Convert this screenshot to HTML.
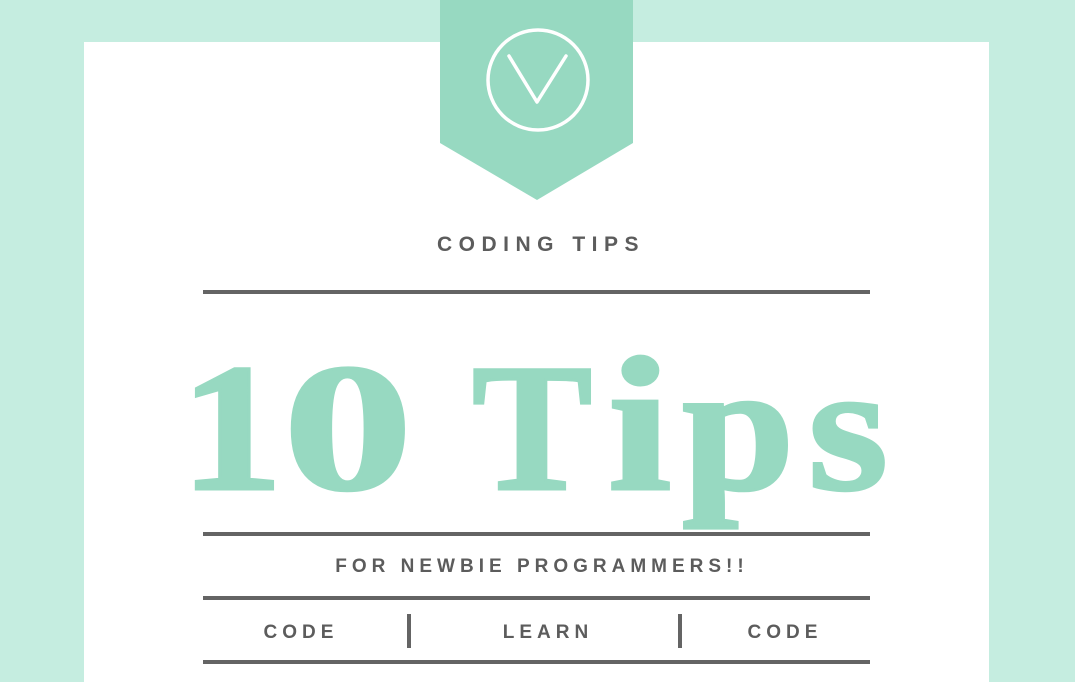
<!DOCTYPE html>
<html><head><meta charset="utf-8"><style>
html,body{margin:0;padding:0;width:1075px;height:682px;overflow:hidden}
body{background:#c5ede0;position:relative;font-family:"Liberation Sans",sans-serif}
.panel{position:absolute;left:84px;top:42px;width:905px;height:640px;background:#fff}
.line{position:absolute;left:203px;width:667px;height:4px;background:#646464}
.t{position:absolute;color:#5c5c5c;font-weight:bold;white-space:nowrap;transform:translateX(-50%)}
.vd{position:absolute;width:4px;height:34px;top:614px;background:#646464}
</style></head><body>
<div class="panel"></div>
<svg width="1075" height="682" style="position:absolute;left:0;top:0">
<polygon points="440,0 633,0 633,143 537,200 440,143" fill="#97d9c1"/>
<circle cx="538" cy="80" r="50" fill="none" stroke="#fff" stroke-width="3.5"/>
<polyline points="509,56 537,102 566,56" fill="none" stroke="#fff" stroke-width="3.5" stroke-linecap="round" stroke-linejoin="round"/>
<g fill="#97d9c1" stroke="#97d9c1" stroke-width="3" font-family="Liberation Serif, serif" font-weight="bold" font-size="184">
<text transform="translate(180,489) scale(1.12,0.99)">1</text>
<text transform="translate(283,489) scale(1.41,0.99)">0</text>
<text transform="translate(472,489) scale(0.98,0.99)">T</text>
<text transform="translate(608,489) scale(1.24,1.04)">i</text>
<text transform="translate(682,489) scale(1.1,1.0)">p</text>
<text transform="translate(808,489) scale(1.12,0.99)">s</text>
</g>
</svg>
<div class="t" style="left:541px;top:233px;font-size:21px;letter-spacing:6.5px">CODING TIPS</div>
<div class="line" style="top:290px"></div>
<div class="line" style="top:532px"></div>
<div class="t" style="left:542px;top:556px;font-size:19px;letter-spacing:5px">FOR NEWBIE PROGRAMMERS!!</div>
<div class="line" style="top:596px"></div>
<div class="t" style="left:301px;top:622px;font-size:19px;letter-spacing:5px">CODE</div>
<div class="vd" style="left:407px"></div>
<div class="t" style="left:548px;top:622px;font-size:19px;letter-spacing:5px">LEARN</div>
<div class="vd" style="left:678px"></div>
<div class="t" style="left:785px;top:622px;font-size:19px;letter-spacing:5px">CODE</div>
<div class="line" style="top:660px"></div>
</body></html>
